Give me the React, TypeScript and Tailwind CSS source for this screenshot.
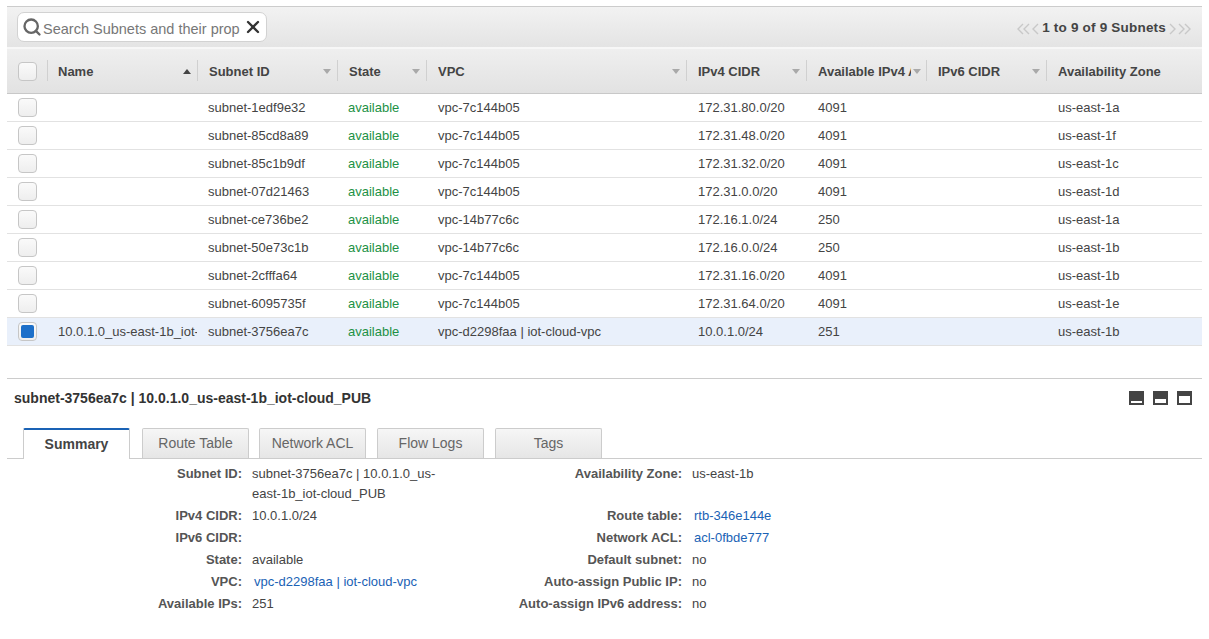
import { Search, X } from 'lucide-react'

const GRID = 'grid grid-cols-[40px_150px_140px_89px_260px_120px_120px_120px_1fr]'

const columns = [
    { label: 'Name', sort: 'up' },
    { label: 'Subnet ID' },
    { label: 'State' },
    { label: 'VPC' },
    { label: 'IPv4 CIDR' },
    { label: 'Available IPv4 Addresses', clip: true },
    { label: 'IPv6 CIDR' },
    { label: 'Availability Zone', last: true },
]

const rows = [
    ['', 'subnet-1edf9e32', 'vpc-7c144b05', '172.31.80.0/20', '4091', 'us-east-1a'],
    ['', 'subnet-85cd8a89', 'vpc-7c144b05', '172.31.48.0/20', '4091', 'us-east-1f'],
    ['', 'subnet-85c1b9df', 'vpc-7c144b05', '172.31.32.0/20', '4091', 'us-east-1c'],
    ['', 'subnet-07d21463', 'vpc-7c144b05', '172.31.0.0/20', '4091', 'us-east-1d'],
    ['', 'subnet-ce736be2', 'vpc-14b77c6c', '172.16.1.0/24', '250', 'us-east-1a'],
    ['', 'subnet-50e73c1b', 'vpc-14b77c6c', '172.16.0.0/24', '250', 'us-east-1b'],
    ['', 'subnet-2cfffa64', 'vpc-7c144b05', '172.31.16.0/20', '4091', 'us-east-1b'],
    ['', 'subnet-6095735f', 'vpc-7c144b05', '172.31.64.0/20', '4091', 'us-east-1e'],
    ['10.0.1.0_us-east-1b_iot-cloud_PUB', 'subnet-3756ea7c', 'vpc-d2298faa | iot-cloud-vpc', '10.0.1.0/24', '251', 'us-east-1b'],
]

const tabs = ['Route Table', 'Network ACL', 'Flow Logs', 'Tags']

const Checkbox = ({ checked }: { checked?: boolean }) => (
    <div className="w-[19px] h-[19px] rounded-[4px] border border-[#c6c6c6] bg-gradient-to-b from-[#fafafa] to-[#eeeeee] flex items-center justify-center">
        {checked && <div className="w-[13px] h-[13px] rounded-[2px] bg-[#1c6fc9]" />}
    </div>
)

const Caret = ({ up }: { up?: boolean }) => (
    <svg width="8" height="5" viewBox="0 0 8 5" className="shrink-0">
        <path d={up ? 'M4 0L8 5H0Z' : 'M0 0H8L4 5Z'} fill={up ? '#444444' : '#a9a9a9'} />
    </svg>
)

// pager arrows: thin grey chevrons, doubled for first/last
const PagerArrow = ({ double, right }: { double?: boolean; right?: boolean }) => (
    <svg width={double ? 13 : 7} height="12" viewBox={double ? '0 0 13 12' : '0 0 7 12'} fill="none" stroke="#c8c8c8" strokeWidth="1.4" className={right ? 'rotate-180' : ''}>
        <path d="M6 1L1 6L6 11" />
        {double && <path d="M12 1L7 6L12 11" />}
    </svg>
)

const Detail = ({ label, value, link }: { label: string; value?: string; link?: boolean }) => (
    <div className="flex">
        <div className="w-[235px] text-right font-bold text-[#555555] shrink-0">{label}</div>
        <div className={`ml-[10px] w-[190px] ${link ? 'pl-[2px] text-[#1a62b5]' : 'text-[#444444]'}`}>{value}</div>
    </div>
)

const DetailRight = ({ label, value, link }: { label: string; value?: string; link?: boolean }) => (
    <div className="flex">
        <div className="w-[240px] text-right font-bold text-[#555555] shrink-0">{label}</div>
        <div className={`ml-[10px] ${link ? 'pl-[2px] text-[#1a62b5]' : 'text-[#444444]'}`}>{value}</div>
    </div>
)

const WindowIcon = ({ h }: { h: number }) => (
    <div className="w-[15px] h-[14px] bg-[#444444] flex items-end justify-center pb-[2px]">
        <div className="w-[11px] bg-white" style={{ height: h }} />
    </div>
)

export default function App() {
    return (
        <div className="w-[1209px] h-[639px] overflow-hidden bg-white px-[7px] pt-[6px] text-[13px] text-[#444444] font-['Liberation_Sans',Arial,sans-serif]">
            <div className="border-t border-[#cccccc] w-[1195px]">
                {/* Toolbar */}
                <div className="h-[42px] flex items-center justify-between pl-[10px] pr-[11px] bg-gradient-to-b from-[#f2f2f2] to-[#e4e4e4] border-b-2 border-[#f7f7f7]">
                    <div className="w-[250px] h-[30px] rounded-[7px] border border-[#d2d2d2] bg-white flex items-center pl-[4px] pr-[3px]">
                        <Search size={20} strokeWidth={2.8} className="text-[#666666] shrink-0" />
                        <div className="ml-[1px] w-[198px] overflow-hidden whitespace-nowrap text-[14.5px] leading-[20px] pt-[3px] text-[#777777]">Search Subnets and their properties</div>
                        <X size={20} strokeWidth={2.8} className="text-[#333333] ml-[3px] shrink-0" />
                    </div>
                    <div className="flex items-center gap-[2px] pt-[3px] font-bold text-[13.5px] text-[#444444] tracking-[0.2px]">
                        <PagerArrow double />
                        <PagerArrow />
                        <span className="mx-[1px]">1 to 9 of 9 Subnets</span>
                        <PagerArrow right />
                        <PagerArrow double right />
                    </div>
                </div>
                {/* Column headers */}
                <div className={`${GRID} h-[45px] bg-gradient-to-b from-[#efefef] to-[#e2e2e2] border-b border-[#c8c8c8]`}>
                    <div className="flex items-center pl-[11px]">
                        <Checkbox />
                    </div>
                    {columns.map((col, i) => (
                        <div key={col.label} className={`flex items-center min-w-0 relative pr-[6px] ${i === 0 ? 'pl-[11px]' : 'pl-[12px]'}`}>
                            <div className="absolute left-0 top-[11px] h-[21px] w-px bg-[#d0d0d0]" />
                            <div className={`font-bold text-[#444444] whitespace-nowrap overflow-hidden pt-[1px] ${col.clip ? 'w-[93px] shrink-0 mr-[2px]' : 'flex-1'}`}>{col.label}</div>
                            {!col.last && <Caret up={col.sort === 'up'} />}
                        </div>
                    ))}
                </div>
                {/* Rows */}
                {rows.map((row, i) => {
                    const selected = i === rows.length - 1
                    return (
                        <div key={row[1]} className={`${GRID} h-[28px] border-b border-[#e2e2e2] items-center ${selected ? 'bg-[#e9f0fb]' : 'bg-white'}`}>
                            <div className="pl-[11px]">
                                <Checkbox checked={selected} />
                            </div>
                            <div className="pl-[11px] overflow-hidden whitespace-nowrap">{row[0]}</div>
                            <div className="pl-[11px] whitespace-nowrap">{row[1]}</div>
                            <div className="pl-[11px] text-[#1d9145]">available</div>
                            <div className="pl-[12px] whitespace-nowrap">{row[2]}</div>
                            <div className="pl-[12px]">{row[3]}</div>
                            <div className="pl-[12px]">{row[4]}</div>
                            <div />
                            <div className="pl-[12px]">{row[5]}</div>
                        </div>
                    )
                })}
                {/* Details pane */}
                <div className="mt-[32px] border-t border-[#cccccc]">
                    <div className="flex items-center justify-between h-[38px] pl-[7px] pr-[10px]">
                        <div className="font-bold text-[14px] text-[#333333]">subnet-3756ea7c | 10.0.1.0_us-east-1b_iot-cloud_PUB</div>
                        <div className="flex gap-[9px]">
                            <WindowIcon h={2} />
                            <WindowIcon h={4} />
                            <WindowIcon h={7} />
                        </div>
                    </div>
                    <div className="mt-[11px] h-[31px] flex items-end gap-[10px] pl-[16px] border-b border-[#cccccc]">
                        <div className="w-[107px] h-[31px] -mb-px mr-[2px] bg-white border border-b-0 border-[#cccccc] border-t-2 border-t-[#1a62b5] rounded-t-[2px] flex items-center justify-center font-bold text-[14px] text-[#444444]">Summary</div>
                        {tabs.map((tab, i) => (
                            <div key={tab} className={`w-[107px] h-[30px] bg-gradient-to-b from-[#f6f6f6] to-[#e6e6e6] border border-b-0 border-[#cccccc] rounded-t-[2px] flex items-center justify-center text-[14px] text-[#666666] ${i >= 2 ? 'ml-px' : ''}`}>{tab}</div>
                        ))}
                    </div>
                    <div className="mt-[4px] grid grid-cols-[435px_1fr] leading-[20px]">
                        <div className="flex flex-col">
                            <div className="h-[42px] pt-[1px]"><Detail label="Subnet ID:" value="subnet-3756ea7c | 10.0.1.0_us-east-1b_iot-cloud_PUB" /></div>
                            <div className="h-[22px] pt-[1px]"><Detail label="IPv4 CIDR:" value="10.0.1.0/24" /></div>
                            <div className="h-[22px] pt-[1px]"><Detail label="IPv6 CIDR:" /></div>
                            <div className="h-[22px] pt-[1px]"><Detail label="State:" value="available" /></div>
                            <div className="h-[22px] pt-[1px]"><Detail label="VPC:" value="vpc-d2298faa | iot-cloud-vpc" link /></div>
                            <div className="h-[22px] pt-[1px]"><Detail label="Available IPs:" value="251" /></div>
                        </div>
                        <div className="flex flex-col">
                            <div className="h-[42px] pt-[1px]"><DetailRight label="Availability Zone:" value="us-east-1b" /></div>
                            <div className="h-[22px] pt-[1px]"><DetailRight label="Route table:" value="rtb-346e144e" link /></div>
                            <div className="h-[22px] pt-[1px]"><DetailRight label="Network ACL:" value="acl-0fbde777" link /></div>
                            <div className="h-[22px] pt-[1px]"><DetailRight label="Default subnet:" value="no" /></div>
                            <div className="h-[22px] pt-[1px]"><DetailRight label="Auto-assign Public IP:" value="no" /></div>
                            <div className="h-[22px] pt-[1px]"><DetailRight label="Auto-assign IPv6 address:" value="no" /></div>
                        </div>
                    </div>
                </div>
            </div>
        </div>
    )
}
